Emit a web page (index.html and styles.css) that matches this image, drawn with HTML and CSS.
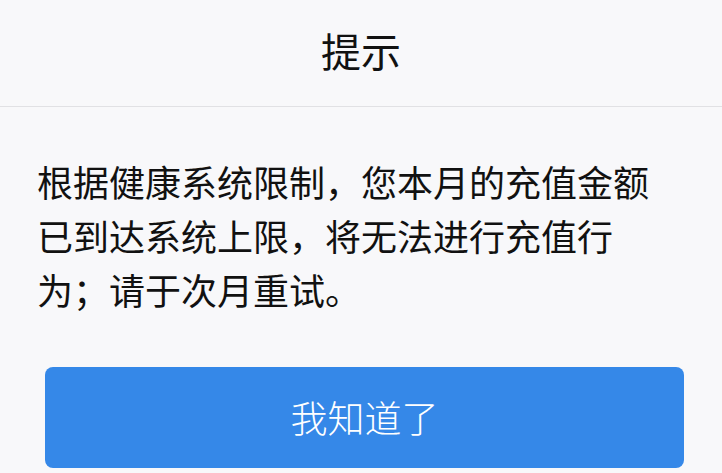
FILE: index.html
```html
<!DOCTYPE html>
<html lang="zh-CN">
<head>
    <meta charset="UTF-8">
    <title>提示</title>
    <link rel="stylesheet" href="styles.css">
</head>
<body>
<div class="dialog">
    <div class="dialog-title">提示</div>
    <div class="dialog-body">
        <p class="dialog-msg">根据健康系统限制，您本月的充值金额已到达系统上限，将无法进行充值行为；请于次月重试。</p>
        <a href="#" class="dialog-btn">我知道了</a>
    </div>
</div>
</body>
</html>
```
FILE: styles.css
```css
*{
    margin: 0;
    padding: 0;
}
html,body{
    background: #f8f8fa;
}
body{
    font-family: "Noto Sans CJK SC", "Noto Sans", sans-serif;
    color: #111;
}
.dialog{
    width: 722px;
}
.dialog-title{
    padding: 22px 0 28px;
    line-height: 56px;
    font-size: 40px;
    text-align: center;
    border-bottom: 1px solid #e1e1e4;
}
.dialog-body{
    padding: 47px 38px 0 37px;
}
.dialog-msg{
    font-size: 36px;
    line-height: 54px;
    width: 640px;
}
/* 按钮文字偏细 */
.dialog-btn{
    display: block;
    margin: 51px 0 0 8px;
    width: 639px;
    height: 101px;
    line-height: 100px;
    background: #3588e8;
    border-radius: 8px;
    color: #fff;
    font-size: 37px;
    font-weight: 300;
    text-align: center;
    text-decoration: none;
}
```
